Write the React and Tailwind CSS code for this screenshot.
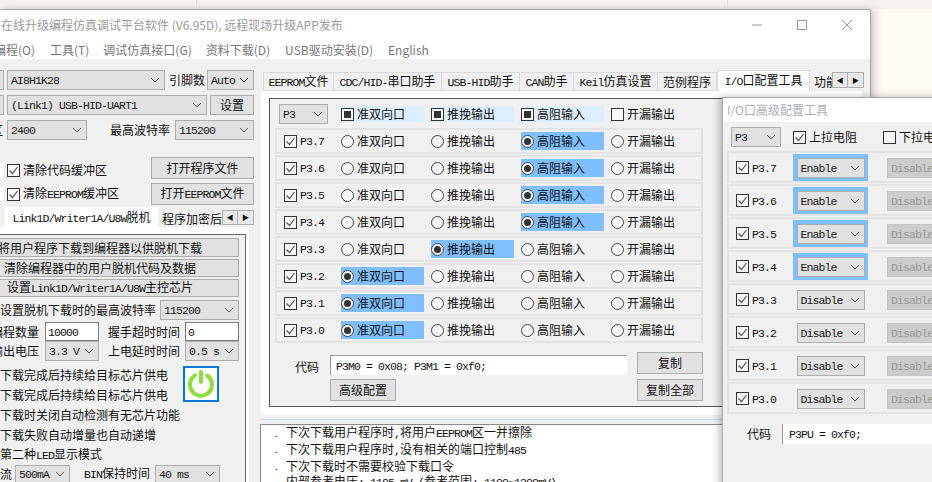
import React from "react";

function T({ children, className = "" }) {
  const parts = String(children).split(/([\x20-\x7e]+)/).filter(Boolean);
  return (
    <span className={"whitespace-pre " + className}>
      {parts.map((p, i) =>
        /^[\x20-\x7e]+$/.test(p) ? (
          <span key={i} className="font-['Liberation_Mono'] text-[11.5px] tracking-[-0.9px]">{p}</span>
        ) : (
          <span key={i}>{p}</span>
        )
      )}
    </span>
  );
}

function Chevron() {
  return (
    <svg width="10" height="6" viewBox="0 0 10 6" className="shrink-0">
      <path d="M1 1l4 4 4-4" fill="none" stroke="#5a5a5a" strokeWidth="1" />
    </svg>
  );
}

function Select({ text, className = "" }) {
  return (
    <div className={"flex items-center justify-between shrink-0 border border-[#adadad] bg-[#e1e1e1] pl-[3px] pr-[4px] text-[#1a1a1a] " + className}>
      <T>{text}</T>
      <Chevron />
    </div>
  );
}

function Btn({ children, className = "" }) {
  return (
    <div className={"flex items-center justify-center shrink-0 border border-[#adadad] bg-[#e1e1e1] text-[#111] whitespace-nowrap " + className}>
      <T>{children}</T>
    </div>
  );
}

function Check({ on = true }) {
  return (
    <span className="flex w-[13px] h-[13px] shrink-0 items-center justify-center border border-[#333] bg-[#f7f7f7]">
      {on && (
        <svg width="11" height="11" viewBox="0 0 11 11">
          <path d="M1.5 5.5l3 3 5-6.5" fill="none" stroke="#555" strokeWidth="1.2" />
        </svg>
      )}
    </span>
  );
}

function Mixed() {
  return (
    <span className="flex w-[13px] h-[13px] shrink-0 items-center justify-center border border-[#333] bg-[#f7f7f7]">
      <span className="w-[7px] h-[7px] bg-[#333]" />
    </span>
  );
}

function Radio({ on }) {
  return (
    <span className="flex w-[13px] h-[13px] shrink-0 items-center justify-center rounded-full border border-[#444] bg-[#f7f7f7]">
      {on && <span className="w-[7px] h-[7px] rounded-full bg-[#333]" />}
    </span>
  );
}

const labels = ["准双向口", "推挽输出", "高阻输入", "开漏输出"];
const pins = [
  ["P3.7", 2],
  ["P3.6", 2],
  ["P3.5", 2],
  ["P3.4", 2],
  ["P3.3", 1],
  ["P3.2", 0],
  ["P3.1", 0],
  ["P3.0", 0],
];

function Win({ className = "" }) {
  return <div className={className} />;
}

function LeftColumn() {
  return (
    <div className="w-[260px] shrink-0 self-start overflow-hidden flex flex-col pt-[11px]">
      <div className="flex h-5 items-center">
        <div className="w-[4px] h-5 shrink-0 border border-l-0 border-[#adadad] bg-[#e1e1e1]" />
        <Select text="AI8H1K28" className="ml-[3px] w-[158px] h-5" />
        <T className="ml-[4px] w-[38px]">引脚数</T>
        <Select text="Auto" className="w-[47px] h-5" />
      </div>
      <div className="flex h-5 items-center mt-[5px]">
        <div className="w-[4px] h-5 shrink-0 border border-l-0 border-[#adadad] bg-[#e1e1e1]" />
        <Select text="(Link1) USB-HID-UART1" className="ml-[3px] w-[200px] h-5" />
        <Btn className="ml-[3px] w-[44px] h-5">设置</Btn>
      </div>
      <div className="flex h-5 items-center mt-[5px]">
        <span className="-ml-[9px] w-[16px] shrink-0">区</span>
        <Select text="2400" className="w-[80px] h-5" />
        <span className="ml-[23px] w-[65px] shrink-0 whitespace-nowrap">最高波特率</span>
        <Select text="115200" className="w-[79px] h-5" />
      </div>
      <div className="flex h-[22px] items-center mt-[17px]">
        <div className="w-[4px] h-[14px] mt-[4px] shrink-0 bg-white" />
        <span className="ml-[3px] mt-[4px]"><Check /></span>
        <T className="ml-[3px] w-[128px] mt-[4px]">清除代码缓冲区</T>
        <Btn className="w-[103px] h-[22px]">打开程序文件</Btn>
      </div>
      <div className="flex h-[22px] items-center mt-[4px]">
        <div className="w-[4px] h-[14px] shrink-0 bg-white" />
        <span className="ml-[3px]"><Check /></span>
        <T className="ml-[3px] w-[128px]">清除EEPROM缓冲区</T>
        <Btn className="w-[103px] h-[22px]">打开EEPROM文件</Btn>
      </div>
      <div className="flex h-5 mt-[2px] items-stretch">
        <div className="ml-[5px] w-[153px] shrink-0 flex items-center justify-center bg-white pt-[2px]">
          <T>Link1D/Writer1A/U8W脱机</T>
        </div>
        <div className="ml-[4px] w-[60px] shrink-0 overflow-hidden flex items-center whitespace-nowrap pt-[3px]">程序加密后</div>
        <div className="flex items-center">
          <span className="w-4 h-[15px] border border-[#adadad] bg-[#e8e8e8] text-[7px] flex items-center justify-center">◀</span>
          <span className="w-4 h-[15px] border border-l-0 border-[#adadad] bg-[#e8e8e8] text-[7px] flex items-center justify-center">▶</span>
        </div>
      </div>
      <div className="w-[249px] h-[268px] bg-white pt-[7px] pr-[3px]">
        <div className="h-[261px] border-t border-r border-[#666] bg-[#f0f0f0] pt-[3px] pr-[6px]">
          <Btn className="-ml-[39px] w-[278px] h-[19px]">将用户程序下载到编程器以供脱机下载</Btn>
          <Btn className="-ml-[39px] w-[278px] h-[18px] mt-[2px]">清除编程器中的用户脱机代码及数据</Btn>
          <Btn className="-ml-[39px] w-[278px] h-[18px] mt-[2px]">设置Link1D/Writer1A/U8W主控芯片</Btn>
          <div className="flex items-center h-5 mt-[3px]">
            <span className="w-[160px] shrink-0 whitespace-nowrap">设置脱机下载时的最高波特率</span>
            <Select text="115200" className="w-[79px] h-5" />
          </div>
          <div className="flex items-center h-[19px] mt-[2px]">
            <span className="-ml-[9px] w-[54px] shrink-0 whitespace-nowrap">编程数量</span>
            <div className="w-[54px] h-[19px] border border-[#7a7a7a] bg-white pl-[2px] flex items-center"><T>10000</T></div>
            <span className="ml-[9px] w-[77px] shrink-0 whitespace-nowrap">握手超时时间</span>
            <div className="w-[54px] h-[19px] border border-[#7a7a7a] bg-white pl-[2px] flex items-center"><T>0</T></div>
          </div>
          <div className="flex items-center h-5">
            <span className="-ml-[9px] w-[54px] shrink-0 whitespace-nowrap">输出电压</span>
            <Select text="3.3 V" className="w-[54px] h-5" />
            <span className="ml-[9px] w-[77px] shrink-0 whitespace-nowrap">上电延时时间</span>
            <Select text="0.5 s" className="w-[54px] h-5" />
          </div>
          <div className="flex mt-[4px]">
            <div className="w-[183px] shrink-0">
              {["下载完成后持续给目标芯片供电", "下载完成后持续给目标芯片供电", "下载时关闭自动检测有无芯片功能", "下载失败自动增量也自动递增", "第二种LED显示模式"].map((s, i) => (
                <div key={i} className="h-5 flex items-center whitespace-nowrap"><T>{s}</T></div>
              ))}
            </div>
            <div className="w-9 h-9 mt-px border-2 border-[#0078d7] bg-white flex items-center justify-center shrink-0">
              <svg width="30" height="30" viewBox="0 0 30 30">
                <path d="M9 6.5a11 11 0 1 0 12 0" fill="none" stroke="#8fdc3c" strokeWidth="4" strokeLinecap="round" />
                <path d="M15 3v10" stroke="#8fdc3c" strokeWidth="4" strokeLinecap="round" />
              </svg>
            </div>
          </div>
          <div className="flex items-center h-[18px]">
            <span className="w-[15px] shrink-0">流</span>
            <Select text="500mA" className="w-[55px] h-[18px]" />
            <T className="ml-[14px] w-[71px]">BIN保持时间</T>
            <Select text="40 ms" className="w-[65px] h-[18px]" />
          </div>
        </div>
      </div>
    </div>
  );
}

function PortRows() {
  return (
    <div className="flex flex-col gap-px mt-[4px] w-[428px]">
      {pins.map(([name, sel]) => (
        <div key={name} className="flex items-center h-[26px] border-2 border-[#e3e3e3] border-r-[#dedede] pl-[7px]">
          <Check />
          <T className="ml-[3px] w-[41px]">{name}</T>
          {labels.map((l, i) => (
            <div key={l} className="w-[90px] shrink-0">
              <div className={"flex items-center h-[18px] w-[83px] whitespace-nowrap " + (i === sel ? "bg-[#80bfff]" : "")}>
                <Radio on={i === sel} />
                <span className="ml-[3px]">{l}</span>
              </div>
            </div>
          ))}
        </div>
      ))}
    </div>
  );
}

function RightColumn() {
  const tabs = [
    ["EEPROM文件", 71],
    ["CDC/HID-串口助手", 108],
    ["USB-HID助手", 78],
    ["CAN助手", 54],
    ["Keil仿真设置", 84],
    ["范例程序", 59],
  ];
  return (
    <div className="flex-1 min-w-0 self-start flex flex-col pt-[11px]">
      <div className="flex h-[21px] items-end pl-[3px] pr-[8px]">
        {tabs.map(([t, w]) => (
          <div key={t} className="h-[19px] flex items-center justify-center border border-l-0 border-[#dadada] first:border-l bg-[#f0f0f0] shrink-0 whitespace-nowrap" style={{ width: w }}>
            <T>{t}</T>
          </div>
        ))}
        <div className="h-[21px] w-[93px] shrink-0 flex items-center justify-center bg-white border border-b-0 border-[#dadada] whitespace-nowrap"><T>I/O口配置工具</T></div>
        <div className="h-[19px] w-[22px] shrink-0 overflow-hidden flex items-center whitespace-nowrap pl-[4px]">功能</div>
        <div className="flex h-[19px] items-start shrink-0">
          <span className="w-4 h-4 border border-[#adadad] bg-[#e8e8e8] text-[7px] flex items-center justify-center">◀</span>
          <span className="w-4 h-4 border border-l-0 border-[#adadad] bg-[#e8e8e8] text-[7px] flex items-center justify-center">▶</span>
        </div>
      </div>
      <div className="ml-px mr-[8px] h-[324px] bg-white pl-[8px] pr-[8px] pt-[7px]">
        <div className="h-[309px] border border-[#555] bg-[#f0f0f0] pl-[5px] pt-[5px]">
          <div className="flex items-center h-[20px] pl-[4px]">
            <Select text="P3" className="w-[49px] h-5" />
            <div className="ml-[13px] flex">
              {labels.map((l, i) => (
                <div key={l} className="w-[90px] shrink-0">
                  <div className={"flex items-center h-4 w-[83px] whitespace-nowrap " + (i < 3 ? "bg-[#dcedfd]" : "")}>
                    {i < 3 ? <Mixed /> : <Check on={false} />}
                    <span className="ml-[3px]">{l}</span>
                  </div>
                </div>
              ))}
            </div>
          </div>
          <PortRows />
          <div className="flex mt-[9px] w-[428px]">
            <div className="w-[55px] shrink-0 pl-[20px] pt-[9px]">代码</div>
            <div className="w-[297px] shrink-0">
              <div className="h-5 bg-white border-l border-t border-[#999] flex items-center pl-[5px] mt-[3px]"><T>P3M0 = 0x08; P3M1 = 0xf0;</T></div>
              <Btn className="w-[66px] h-[22px] mt-[4px]">高级配置</Btn>
            </div>
            <div className="ml-[10px] flex flex-col gap-[5px]">
              <Btn className="w-[66px] h-[22px]">复制</Btn>
              <Btn className="w-[66px] h-[22px]">复制全部</Btn>
            </div>
          </div>
        </div>
      </div>
      <div className="h-[4px]" />
      <div className="h-px bg-[#c4dfef]" />
      <div className="h-[4px]" />
      <div className="h-[70px] bg-white border-l border-t border-[#8a8a8a] pl-[14px]">
        {["下次下载用户程序时,将用户EEPROM区一并擦除", "下次下载用户程序时,没有相关的端口控制485", "下次下载时不需要校验下载口令", "内部参考电压: 1185 mV (参考范围: 1100~1300mV)"].map((s, i) => (
          <div key={i} className="h-[16.3px] flex items-center whitespace-nowrap">
            <span className="w-[11px] text-[10px] shrink-0">{i < 3 ? "." : ""}</span>
            <T>{s}</T>
          </div>
        ))}
      </div>
    </div>
  );
}

function ConfigWindow() {
  const rows = [
    ["P3.7", "Enable"],
    ["P3.6", "Enable"],
    ["P3.5", "Enable"],
    ["P3.4", "Enable"],
    ["P3.3", "Disable"],
    ["P3.2", "Disable"],
    ["P3.1", "Disable"],
    ["P3.0", "Disable"],
  ];
  return (
    <div className="absolute left-[722px] top-[97px] w-[260px] h-[400px] bg-[#f0f0f0] border-l border-t border-[#aaa] shadow-[-3px_0_7px_rgba(0,0,0,0.25)]">
      <div className="h-[24px] bg-white flex items-center pl-[4px] text-[#a8aeb4] whitespace-nowrap text-[12px]">I/O口高级配置工具</div>
      <div className="flex items-center h-5 mt-[5px] pl-[8px]">
        <Select text="P3" className="w-[50px] h-5" />
        <span className="ml-[12px]"><Check /></span>
        <span className="ml-[3px] w-[74px] shrink-0">上拉电阻</span>
        <Check on={false} />
        <span className="ml-[3px] whitespace-nowrap">下拉电阻</span>
      </div>
      <div className="flex flex-col gap-px mt-[4px] pl-[4px]">
        {rows.map(([p, v]) => (
          <div key={p} className="flex items-center h-[32px] border-2 border-r-0 border-[#e3e3e3] pl-[7px] pt-px">
            <Check />
            <T className="ml-[3px] w-[41px]">{p}</T>
            <div className={"w-[75px] h-[27px] shrink-0 flex items-center justify-center " + (v === "Enable" ? "bg-[#80bfff]" : "")}>
              <Select text={v} className="w-[68px] h-5" />
            </div>
            <div className="ml-[19px] w-[70px] h-5 shrink-0 flex items-center bg-[#cccccc] border border-[#c4c4c4] pl-[3px] text-[#999]">
              <T>Disable</T>
            </div>
          </div>
        ))}
      </div>
      <div className="flex items-center mt-[10px] pl-[24px] h-5">
        <span className="w-[35px] shrink-0">代码</span>
        <div className="w-[180px] h-5 bg-white border-l border-[#999] flex items-center pl-[6px]"><T>P3PU = 0xf0;</T></div>
      </div>
    </div>
  );
}

export default function App() {
  return (
    <div className="relative w-[932px] h-[482px] overflow-hidden bg-[#fef9f3] font-['Noto_Sans_CJK_SC',sans-serif] text-[12px] leading-none text-[#111]">
      <div className="flex h-[9px] bg-[#f6f3ee]">
        <Win className="ml-[196px] w-px bg-[#e0ddd8]" />
        <Win className="ml-[530px] w-px bg-[#e0ddd8]" />
      </div>
      <div className="w-[871px] h-[473px] border-t border-r border-[#a8a8a8] bg-[#f0f0f0] shadow-[2px_1px_8px_rgba(0,0,0,0.25)] flex flex-col overflow-hidden">
        <div className="h-[30px] bg-white flex items-center justify-between shrink-0 pl-px">
          <span className="text-[#9a9a9a] whitespace-nowrap">在线升级编程仿真调试平台软件 (V6.95D), 远程现场升级APP发布</span>
          <div className="flex items-center pr-[18px] gap-[35px]">
            <svg width="10" height="10" viewBox="0 0 10 10"><path d="M0 5h10" stroke="#999" /></svg>
            <svg width="10" height="10" viewBox="0 0 10 10"><rect x=".5" y=".5" width="9" height="9" fill="none" stroke="#999" /></svg>
            <svg width="10" height="10" viewBox="0 0 10 10"><path d="M0 0l10 10M10 0L0 10" stroke="#999" /></svg>
          </div>
        </div>
        <div className="h-[19px] bg-white flex items-center shrink-0 text-[#777] whitespace-nowrap">
          <span className="-ml-[6px]">编程(O)</span>
          <span className="ml-[15px]">工具(T)</span>
          <span className="ml-[14px]">调试仿真接口(G)</span>
          <span className="ml-[14px]">资料下载(D)</span>
          <span className="ml-[15px]">USB驱动安装(D)</span>
          <span className="ml-[15px]">English</span>
        </div>
        <div className="flex flex-1 min-h-0">
          <LeftColumn />
          <RightColumn />
        </div>
      </div>
      <ConfigWindow />
    </div>
  );
}
